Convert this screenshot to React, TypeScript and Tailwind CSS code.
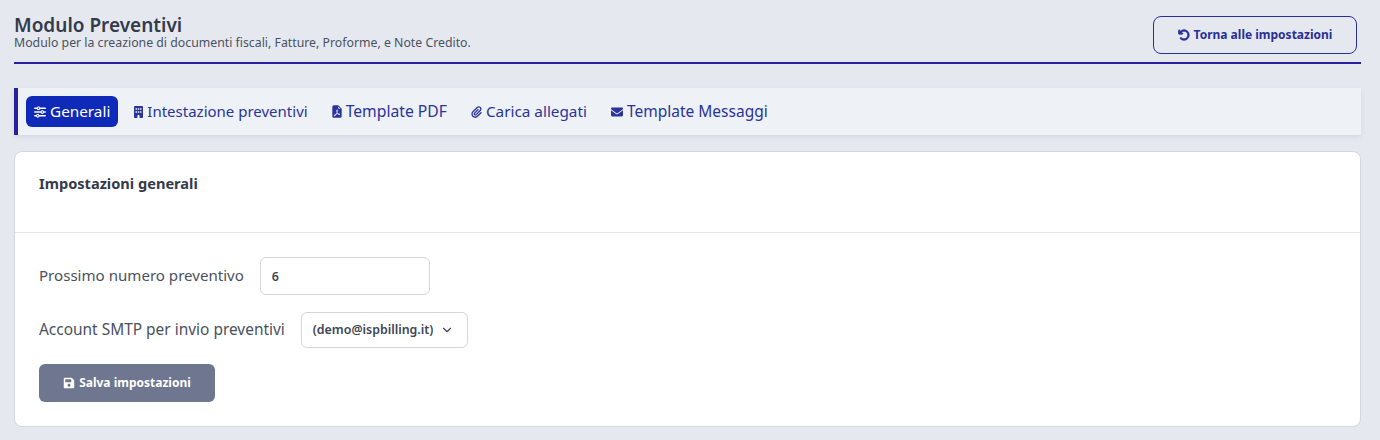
import { ChevronDown } from 'lucide-react';
import { BsFileEarmarkPdfFill } from 'react-icons/bs';
import { FaSave } from 'react-icons/fa';
import { FaArrowRotateLeft, FaBuilding, FaEnvelope, FaPaperclip, FaSliders } from 'react-icons/fa6';

const tabs = [
  { label: 'Generali', icon: FaSliders, iconClass: 'h-[12px] w-[12px]', textClass: 'text-[15.3px]', active: true },
  { label: 'Intestazione preventivi', icon: FaBuilding, iconClass: 'h-[12px] w-[9px]', textClass: 'text-[15px]' },
  { label: 'Template PDF', icon: BsFileEarmarkPdfFill, iconClass: 'h-[13px] w-[10px] scale-125', textClass: 'text-[15.7px]' },
  { label: 'Carica allegati', icon: FaPaperclip, iconClass: 'h-[12px] w-[11px]', textClass: 'text-[15.3px]' },
  { label: 'Template Messaggi', icon: FaEnvelope, iconClass: 'h-[12px] w-[12px]', textClass: 'text-[15.5px]' },
];

export default function App() {
  return (
    <div className="h-[440px] overflow-hidden bg-[#e5e9ef] pl-[14px] pr-[19px] font-['Noto_Sans',sans-serif] text-[#3e4555]">
      {/* Header */}
      <div className="flex h-[64px] items-start justify-between border-b-2 border-[#2a1fa3]">
        <div className="pt-[15px]">
          <h1 className="text-[19px] leading-[21px] font-semibold text-[#343a4a]">Modulo Preventivi</h1>
          <p className="text-[12.3px] leading-[13px] text-[#4a5161]">
            Modulo per la creazione di documenti fiscali, Fatture, Proforme, e Note Credito.
          </p>
        </div>
        <button className="mt-[16px] mr-[4px] flex h-[38px] w-[204px] items-center justify-center gap-[4px] rounded-lg border border-[#2a2f96] text-[12px] font-bold text-[#2a2f96]">
          <FaArrowRotateLeft className="h-[12px] w-[12px] stroke-current stroke-[30]" />
          Torna alle impostazioni
        </button>
      </div>

      {/* Tabs */}
      <div className="mt-[24px] flex h-[47px] items-center gap-[8px] border-l-4 border-[#2a1fa3] bg-[#eef1f6] pl-[8px] shadow-[0_2px_5px_rgba(60,70,100,0.1)]">
        {tabs.map((tab) => (
          <div
            key={tab.label}
            className={`flex h-[31px] items-center gap-[4px] rounded-md px-[8px] ${
              tab.active ? 'bg-[#0f2ab8] text-white' : 'text-[#2a349c]'
            }`}
          >
            <tab.icon className={tab.iconClass} />
            <span className={`pb-[2px] leading-[22px] ${tab.textClass}`}>{tab.label}</span>
          </div>
        ))}
      </div>

      {/* Card */}
      <div className="mt-[16px] h-[276px] rounded-lg border border-[#d3d6dc] bg-white">
        <div className="h-[81px] border-b border-[#e3e5e9] pt-[21px] pl-[24px] text-[14.6px] leading-[20px] font-bold text-[#343a4a]">
          Impostazioni generali
        </div>
        <div className="pt-[24px] pl-[24px]">
          <div className="flex items-center gap-[16px]">
            <label className="pb-[2px] text-[15.08px] leading-[34px] text-[#4b515e]">Prossimo numero preventivo</label>
            <input
              readOnly
              value="6"
              className="h-[38px] w-[170px] rounded-md border border-[#d3d6dc] px-[11px] text-[12.4px] font-semibold text-[#3e4555]"
            />
          </div>
          <div className="mt-[17px] flex items-center gap-[16px]">
            <label className="pb-[2px] text-[15.45px] leading-[34px] text-[#4b515e]">Account SMTP per invio preventivi</label>
            <div className="flex h-[36px] w-[167px] items-center gap-[7px] rounded-md border border-[#d3d6dc] pl-[11px] text-[12.4px] font-semibold text-[#3e4555]">
              (demo@ispbilling.it)
              <ChevronDown className="h-[14px] w-[14px]" />
            </div>
          </div>
          <button className="mt-[16px] flex h-[38px] w-[176px] items-center justify-center gap-[4px] rounded-md bg-[#6e7690] text-[12px] font-bold text-white">
            <FaSave className="h-[12px] w-[12px]" />
            Salva impostazioni
          </button>
        </div>
      </div>
    </div>
  );
}
